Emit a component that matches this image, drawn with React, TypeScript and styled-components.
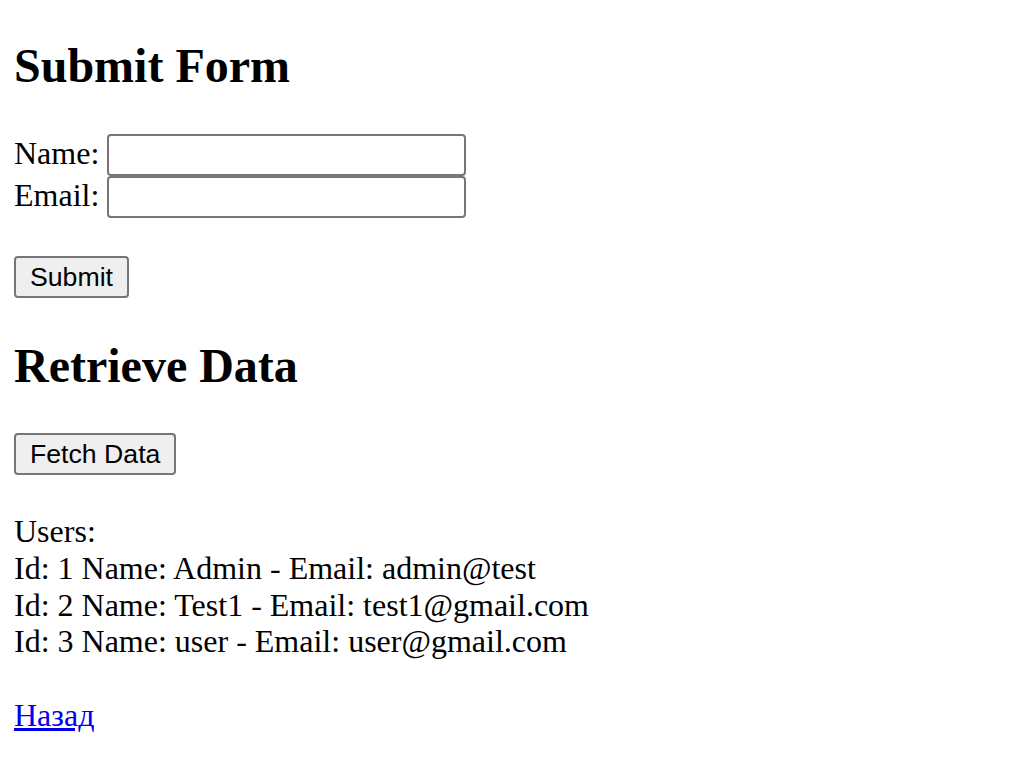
import * as React from "react";
import styled, { createGlobalStyle } from "styled-components";

const GlobalStyle = createGlobalStyle`
  body {
    margin: 0;
    background: #ffffff;
  }
`;

const Page = styled.div`
  display: flex;
  flex-direction: column;
  align-items: flex-start;
  padding: 38px 14px 40px;
  font-family: "Liberation Serif", "Times New Roman", serif;
  font-size: 32px;
  line-height: 36.8px;
  color: #000000;
`;

const Title = styled.h2<{ $after?: number }>`
  margin: 0 0 ${(p) => p.$after ?? 40}px 0;
  font-size: 48px;
  line-height: 55px;
  font-weight: bold;
`;

const Form = styled.form`
  display: flex;
  flex-direction: column;
  align-items: flex-start;
  margin: 0;
`;

const FieldRow = styled.div`
  display: flex;
  align-items: baseline;
  gap: 8px;
`;

const Input = styled.input`
  box-sizing: border-box;
  width: 359px;
  height: 42px;
  margin: 0;
  padding: 2px 4px;
  border: 2px solid #767676;
  border-radius: 4px;
  background: #ffffff;
  font-family: "Liberation Sans", Arial, sans-serif;
  font-size: 26.67px;
`;

const Button = styled.button<{ $top?: number }>`
  box-sizing: border-box;
  height: 42px;
  margin: ${(p) => p.$top ?? 0}px 0 0 0;
  padding: 0 14px;
  border: 2px solid #767676;
  border-radius: 4px;
  background: #efefef;
  color: #000000;
  font-family: "Liberation Sans", Arial, sans-serif;
  font-size: 26.67px;
  line-height: 30px;
  cursor: pointer;
`;

const Section = styled.div`
  margin-top: 40px;
`;

const UserList = styled.div`
  margin-top: 38px;
`;

const BackLink = styled.a`
  margin-top: 37px;
  color: #0000ee;
  text-decoration: underline;
`;

const users = [
  { id: 1, name: "Admin", email: "admin@test" },
  { id: 2, name: "Test1", email: "test1@gmail.com" },
  { id: 3, name: "user", email: "user@gmail.com" },
];

const App = () => {
  return (
    <>
      <GlobalStyle />
      <Page>
        <Title $after={41}>Submit Form</Title>
        <Form onSubmit={(e) => e.preventDefault()}>
          <FieldRow>
            <label htmlFor="name">Name:</label>
            <Input id="name" type="text" />
          </FieldRow>
          <FieldRow>
            <label htmlFor="email">Email:</label>
            <Input id="email" type="email" />
          </FieldRow>
          <Button type="submit" $top={38}>
            Submit
          </Button>
        </Form>
        <Section>
          <Title>Retrieve Data</Title>
          <Button type="button">Fetch Data</Button>
        </Section>
        <UserList>
          <div>Users:</div>
          {users.map((u) => (
            <div key={u.id}>
              Id: {u.id} Name: {u.name} - Email: {u.email}
            </div>
          ))}
        </UserList>
        <BackLink href="#">Назад</BackLink>
      </Page>
    </>
  );
};

export default App;
